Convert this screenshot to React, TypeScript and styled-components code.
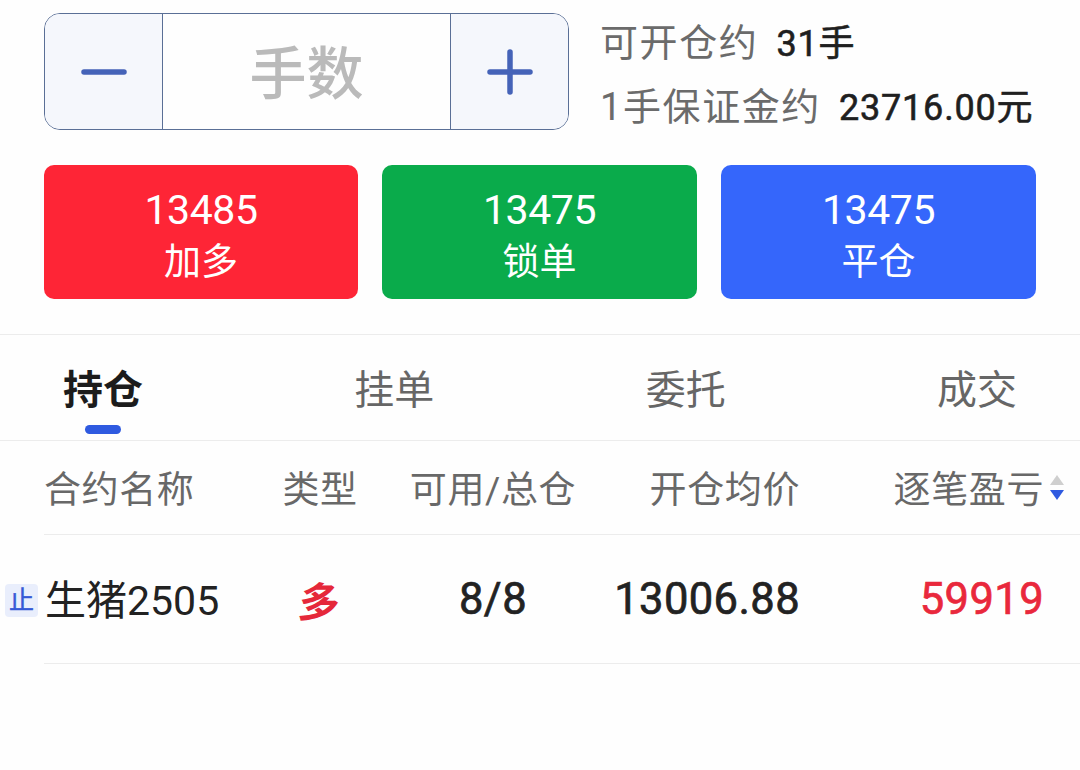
import React from 'react';
import styled, { createGlobalStyle } from 'styled-components';

const GlobalStyle = createGlobalStyle`
  html, body {
    margin: 0;
    padding: 0;
    background: #fff;
  }
  body {
    font-family: Roboto, "Noto Sans CJK SC", sans-serif;
  }
`;

const Page = styled.div`
  width: 1080px;
  height: 770px;
  overflow: hidden;
  background: #fefefe;
`;

// Top order form
const OrderRow = styled.div`
  display: flex;
  align-items: center;
  gap: 31px;
  padding: 13px 0 0 44px;
`;

const Stepper = styled.div`
  display: flex;
  width: 525px;
  height: 117px;
  box-sizing: border-box;
  border: 1px solid #5a6f96;
  border-radius: 16px;
  overflow: hidden;
`;

const StepButton = styled.div<{ $side: 'left' | 'right' }>`
  width: 118px;
  box-sizing: border-box;
  flex: none;
  display: flex;
  align-items: center;
  justify-content: center;
  background: #f5f7fc;
  ${p => (p.$side === 'left' ? 'border-right: 1px solid #5a6f96;' : 'border-left: 1px solid #5a6f96;')}
`;

const QtyPlaceholder = styled.div`
  flex: 1;
  text-align: center;
  font-size: 57px;
  font-weight: 500;
  color: #bababa;
  line-height: 122px;
`;

const Info = styled.div`
  display: flex;
  flex-direction: column;
  gap: 19px;
`;

const InfoLine = styled.div`
  display: flex;
  align-items: center;
  gap: 18px;
  height: 45px;
  font-size: 38px;
  letter-spacing: 1.6px;
  color: #6b6b6b;
`;

const InfoValue = styled.span`
  font-size: 36px;
  letter-spacing: 0.8px;
  -webkit-text-stroke: 0.6px currentColor;
  color: #1f1f1f;
`;

const TradeRow = styled.div`
  display: grid;
  grid-template-columns: 314px 315px 315px;
  gap: 24px;
  padding: 35px 0 35px 44px;
  border-bottom: 1px solid #ececec;
`;

const TradeButton = styled.div<{ $color: string }>`
  height: 134px;
  border-radius: 10px;
  background: ${p => p.$color};
  color: #fff;
  display: flex;
  flex-direction: column;
  align-items: center;
  justify-content: center;
  padding-top: 7px;
  box-sizing: border-box;
`;

const TradePrice = styled.div`
  font-size: 41px;
  line-height: 54px;
  letter-spacing: -0.4px;
`;

const TradeLabel = styled.div`
  font-size: 37px;
  line-height: 52px;
`;

// Tabs
const Tabs = styled.div`
  display: flex;
  justify-content: space-between;
  height: 105px;
  padding: 0 63px;
  border-bottom: 1px solid #ececec;
`;

const Tab = styled.div<{ $active?: boolean }>`
  position: relative;
  font-size: 40px;
  line-height: 112px;
  font-weight: ${p => (p.$active ? 700 : 400)};
  color: ${p => (p.$active ? '#1c1c1c' : '#666')};
`;

const TabMark = styled.div`
  position: absolute;
  left: 22px;
  top: 90px;
  width: 36px;
  height: 9px;
  border-radius: 5px;
  background: #2f5ae0;
`;

// Position table
const TableRow = styled.div<{ $height: number }>`
  display: grid;
  grid-template-columns: 206px 140px 206px 204px 244px;
  align-items: center;
  height: ${p => p.$height}px;
  margin-left: 44px;
  border-bottom: 1px solid #ececec;
`;

const HeadCell = styled.div<{ $align: string }>`
  position: relative;
  font-size: 37px;
  letter-spacing: 0.6px;
  color: #686868;
  white-space: nowrap;
  text-align: ${p => p.$align};
  margin-top: -2px;
`;

const SortIcon = styled.svg`
  position: absolute;
  right: -21px;
  top: 15px;
`;

const Cell = styled.div<{ $align: string; $color?: string }>`
  position: relative;
  font-size: 43.5px;
  letter-spacing: 0.4px;
  -webkit-text-stroke: 0.7px currentColor;
  white-space: nowrap;
  color: ${p => p.$color || '#222'};
  text-align: ${p => p.$align};
`;

const NameCell = styled(Cell)`
  font-size: 41px;
  letter-spacing: 0;
  -webkit-text-stroke: 0;
  margin: -4px 0 0 1px;
`;

const StopBadge = styled.span`
  position: absolute;
  left: -40px;
  top: calc(50% - 13px);
  width: 33px;
  height: 33px;
  border-radius: 4px;
  background: #e9eefc;
  color: #3559d6;
  font-size: 25px;
  line-height: 33px;
  letter-spacing: 0;
  -webkit-text-stroke: 0.5px currentColor;
  text-align: center;
`;

const DirectionCell = styled(Cell)`
  font-size: 41px;
  font-weight: 700;
  -webkit-text-stroke: 0;
  transform: skewX(-7deg);
`;

const tradeButtons = [
  { price: '13485', label: '加多', color: '#fe2536' },
  { price: '13475', label: '锁单', color: '#0aab4b' },
  { price: '13475', label: '平仓', color: '#3566fb' },
];

const tabs = ['持仓', '挂单', '委托', '成交'];

const App: React.FC = () => {
  return (
    <Page>
      <GlobalStyle />
      <OrderRow>
        <Stepper>
          <StepButton $side="left">
            <svg width="46" height="10" viewBox="0 0 46 10">
              <line x1="3" y1="5" x2="43" y2="5" stroke="#4563b8" strokeWidth="5.5" strokeLinecap="round" />
            </svg>
          </StepButton>
          <QtyPlaceholder>手数</QtyPlaceholder>
          <StepButton $side="right">
            <svg width="46" height="46" viewBox="0 0 46 46">
              <line x1="3" y1="23" x2="43" y2="23" stroke="#4563b8" strokeWidth="5.5" strokeLinecap="round" />
              <line x1="23" y1="3" x2="23" y2="43" stroke="#4563b8" strokeWidth="5.5" strokeLinecap="round" />
            </svg>
          </StepButton>
        </Stepper>
        <Info>
          <InfoLine>
            可开仓约<InfoValue>31手</InfoValue>
          </InfoLine>
          <InfoLine>
            1手保证金约<InfoValue>23716.00元</InfoValue>
          </InfoLine>
        </Info>
      </OrderRow>

      <TradeRow>
        {tradeButtons.map(btn => (
          <TradeButton key={btn.label} $color={btn.color}>
            <TradePrice>{btn.price}</TradePrice>
            <TradeLabel>{btn.label}</TradeLabel>
          </TradeButton>
        ))}
      </TradeRow>

      <Tabs>
        {tabs.map((tab, i) => (
          <Tab key={tab} $active={i === 0}>
            {tab}
            {i === 0 && <TabMark />}
          </Tab>
        ))}
      </Tabs>

      <TableRow $height={93}>
        <HeadCell $align="left">合约名称</HeadCell>
        <HeadCell $align="center">类型</HeadCell>
        <HeadCell $align="center">可用/总仓</HeadCell>
        <HeadCell $align="right">开仓均价</HeadCell>
        <HeadCell $align="right">
          逐笔盈亏
          <SortIcon width="16" height="28" viewBox="0 0 16 28">
            <polygon points="8,0 15,10 1,10" fill="#cfcfcf" />
            <polygon points="1,15 15,15 8,25" fill="#2f5ae0" />
          </SortIcon>
        </HeadCell>
      </TableRow>

      <TableRow $height={128}>
        <NameCell $align="left">
          <StopBadge>止</StopBadge>
          生猪2505
        </NameCell>
        <DirectionCell $align="center" $color="#e5283a">多</DirectionCell>
        <Cell $align="center">8/8</Cell>
        <Cell $align="right">13006.88</Cell>
        <Cell $align="right" $color="#e9283c">59919</Cell>
      </TableRow>
    </Page>
  );
};

export default App;
